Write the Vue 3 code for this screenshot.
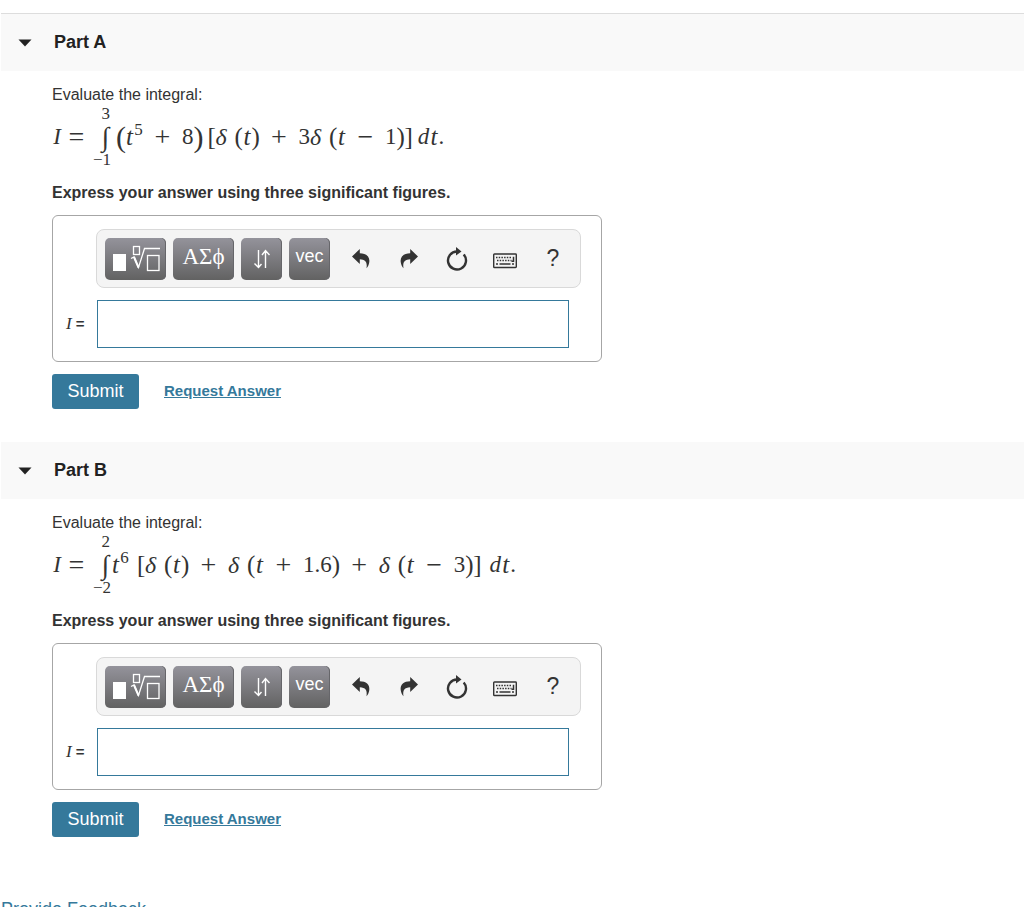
<script setup>
import { reactive } from 'vue'

const m = (kind, text) => ({ kind, text })
const gap = m('gap', '')
const gapSmall = m('gap-small', '')

const parts = reactive([
  {
    id: 'a',
    title: 'Part A',
    open: true,
    answer: '',
    upper: '3',
    lower: '−1',
    terms: [
      gapSmall, m('paren big', '('), m('var', 't'), m('sup', '5'), m('op', '+'), m('num', '8'), m('paren big', ')'), gapSmall,
      m('bracket', '['), m('delta', 'δ'), gap, m('paren', '('), m('var', 't'), m('paren', ')'), m('op', '+'),
      m('num', '3'), m('delta', 'δ'), gap, m('paren', '('), m('var', 't'), m('op', '−'), m('num', '1'),
      m('paren', ')'), m('bracket', ']'), gapSmall, m('diff', 'd'), m('var', 't'), m('dot', '.')
    ]
  },
  {
    id: 'b',
    title: 'Part B',
    open: true,
    answer: '',
    upper: '2',
    lower: '−2',
    terms: [
      m('var', 't'), m('sup', '6'), gap, m('bracket', '['), m('delta', 'δ'), gap,
      m('paren', '('), m('var', 't'), m('paren', ')'), m('op', '+'), m('delta', 'δ'), gap, m('paren', '('), m('var', 't'),
      m('op', '+'), m('num', '1.6'), m('paren', ')'), m('op', '+'), m('delta', 'δ'), gap, m('paren', '('),
      m('var', 't'), m('op', '−'), m('num', '3'), m('paren', ')'), m('bracket', ']'), gap,
      m('diff', 'd'), m('var', 't'), m('dot', '.')
    ]
  }
])
</script>

<template>
  <main class="page">
    <section v-for="part in parts" :key="part.id" class="part">
      <h2 class="part-head">
        <button type="button" class="toggle" :aria-expanded="part.open" @click="part.open = !part.open">
          <svg class="caret" viewBox="0 0 14 8" aria-hidden="true"><path d="M.5 .5h13L7 7.5z" fill="#222" /></svg>
          <span>{{ part.title }}</span>
        </button>
      </h2>

      <div v-if="part.open" class="part-body">
        <p class="prompt">Evaluate the integral:</p>
        <div class="formula">
          <span class="m lead">I</span>
          <span class="m equals">=</span>
          <span class="integral">
            <span class="limit upper">{{ part.upper }}</span>
            <span class="sign">∫</span>
            <span class="limit">{{ part.lower }}</span>
          </span>
          <span v-for="(t, i) in part.terms" :key="i" class="m" :class="t.kind">{{ t.text }}</span>
        </div>
        <p class="directions">Express your answer using three significant figures.</p>

        <form class="answer" @submit.prevent>
          <div class="answer-box">
            <div class="toolbar" role="toolbar" aria-label="Equation tools">
              <button type="button" class="key wide" aria-label="Templates">
                <svg class="template-icon" viewBox="0 0 50 30" fill="none" stroke="#fff" aria-hidden="true">
                  <rect x="2" y="10" width="13" height="17" fill="#fff" stroke="none" />
                  <rect x="22.5" y="2.5" width="6" height="8" stroke-width="1.3" />
                  <path d="M20 14.5l3-1.5 4.500 10.500L33.500 4.500H49" stroke-width="1.3" />
                  <path d="M23 13l4.500 10.500" stroke-width="2" />
                  <rect x="36.500" y="11.500" width="11.500" height="15" stroke-width="1.300" />
                </svg>
              </button>
              <button type="button" class="key wide greek">ΑΣϕ</button>
              <button type="button" class="key" aria-label="Arrows">
                <svg class="arrows-icon" viewBox="0 0 16 20" fill="none" stroke="#fff" stroke-width="1.4" aria-hidden="true">
                  <path d="M4.500 1v17M.5 14.500l4 4 3-3.500M11.500 19V2M8 6l3.500-4.500L15.500 6" />
                </svg>
              </button>
              <button type="button" class="key vec">vec</button>
              <div class="tools">
                <button type="button" class="tool" aria-label="Undo">
                  <svg viewBox="0 0 24 24" aria-hidden="true"><path d="M3 9.500L10.800 2v4.300C17 6.300 21 9.500 20.300 15c-.3 2.500-1.300 4.500-2.800 6.300 1-6-1-8.800-6.700-9V17z" fill="#333" /></svg>
                </button>
                <button type="button" class="tool" aria-label="Redo">
                  <svg viewBox="0 0 24 24" aria-hidden="true"><path d="M21 9.500L13.200 2v4.300C7 6.300 3 9.500 3.700 15c.3 2.500 1.300 4.500 2.800 6.300-1-6 1-8.800 6.700-9V17z" fill="#333" /></svg>
                </button>
                <button type="button" class="tool" aria-label="Reset">
                  <svg viewBox="0 0 24 24" aria-hidden="true">
                    <path d="M12 4.500a9 9 0 1 0 6.700 3" fill="none" stroke="#333" stroke-width="2.400" />
                    <path d="M11 0l5.500 4.500-5.500 4z" fill="#333" />
                  </svg>
                </button>
                <button type="button" class="tool" aria-label="Keyboard shortcuts">
                  <svg class="keyboard" viewBox="0 0 24 24" fill="none" stroke="#333" aria-hidden="true">
                    <rect x=".7" y="7" width="22.600" height="13.500" rx=".8" stroke-width="1.400" />
                    <path d="M3 10.500h15.500M4 13.500h14.500" stroke-width="1.500" stroke-dasharray="1.500 1.200" />
                    <path d="M3 17h2M6.500 17h11M19 17h2M20.500 9.700v4.600h-2" stroke-width="1.500" />
                  </svg>
                </button>
                <button type="button" class="tool help" aria-label="Help">?</button>
              </div>
            </div>
            <label class="answer-label" :for="'answer-' + part.id"><i>I</i> =</label>
            <input :id="'answer-' + part.id" v-model="part.answer" class="answer-input" type="text" autocomplete="off" />
          </div>
          <div class="actions">
            <button type="submit" class="submit">Submit</button>
            <a href="#" class="request" @click.prevent>Request Answer</a>
          </div>
        </form>
      </div>
    </section>
    <footer class="footer"><a href="#" @click.prevent>Provide Feedback</a></footer>
  </main>
</template>

<style>
body {
  background: #fff;
}
</style>

<style scoped>
.page {
  padding: 14px 0 0 1px;
  font-family: "Liberation Sans", Arial, sans-serif;
  font-size: 16px;
  color: #333;
}
button {
  font: inherit;
  border: 0;
  cursor: pointer;
}
p {
  margin: 0;
}
.part {
  padding-bottom: 33px;
}
.part-head {
  margin: 0;
  background: #f9f9f9;
}
.part:first-child .part-head {
  box-shadow: 0 -1px #ddd;
}
.toggle {
  display: flex;
  align-items: center;
  gap: 22px;
  width: 100%;
  height: 57px;
  padding: 0 17px;
  background: transparent;
  color: #222;
  font-size: 18px;
  font-weight: bold;
}
.caret {
  width: 14px;
  height: 8px;
}
.part-body {
  padding: 14px 51px 0;
}
.prompt {
  line-height: 20px;
}
.formula {
  display: flex;
  align-items: center;
  height: 64px;
  font-family: "Liberation Serif", "Times New Roman", serif;
}
.m {
  flex: none;
  height: 28px;
  line-height: 28px;
  text-align: center;
  font-size: 23px;
}
.lead {
  width: 10px;
  font-style: italic;
}
.equals {
  width: 17px;
  margin-left: 6px;
  font-size: 28px;
}
.integral {
  display: flex;
  flex-direction: column;
  align-items: flex-end;
  width: 24px;
  margin-left: 2px;
}
.limit {
  font-size: 17px;
  line-height: 16px;
}
.upper {
  padding-right: 1px;
}
.sign {
  padding-right: 2px;
  font-size: 27px;
  font-style: italic;
  line-height: 30px;
}
.var {
  width: 9px;
  font-size: 25px;
  font-style: italic;
}
.delta {
  width: 11px;
  font-size: 24px;
  font-style: italic;
}
.diff {
  width: 12px;
  font-style: italic;
}
.paren {
  width: 8px;
  font-size: 25px;
}
.big {
  width: 9px;
  font-size: 30px;
}
.bracket {
  width: 8px;
  font-size: 25px;
}
.sup {
  width: 9px;
  height: 38px;
  line-height: 24px;
  font-size: 17px;
}
.op {
  width: 17px;
  margin: 0 11px;
  font-size: 28px;
}
.gap {
  width: 8px;
}
.gap-small {
  width: 5px;
}
.directions {
  margin: 12px 0 10px;
  line-height: 24px;
  font-weight: bold;
}
.answer-box {
  box-sizing: border-box;
  display: grid;
  grid-template-columns: 45px minmax(0, 1fr);
  row-gap: 12px;
  max-width: 550px;
  padding: 13px 20px 13px 0;
  border: 1px solid #a6a6a6;
  border-radius: 6px;
}
.toolbar {
  grid-column: 2;
  box-sizing: border-box;
  display: flex;
  align-items: center;
  gap: 7px;
  height: 59px;
  margin-left: -2px;
  padding-left: 8px;
  background: #f4f4f4;
  border: 1px solid #d9d9d9;
  border-radius: 8px;
}
.key {
  display: flex;
  align-items: center;
  justify-content: center;
  width: 41px;
  height: 42px;
  padding: 0;
  border-radius: 5px;
  background: linear-gradient(#94939b, #626262);
  box-shadow: inset -1px 0 #66666a;
  color: #fff;
}
.wide {
  width: 61px;
}
.template-icon {
  width: 50px;
  height: 30px;
}
.greek {
  padding-bottom: 3px;
  font-family: "Liberation Serif", "Times New Roman", serif;
  font-size: 23px;
}
.arrows-icon {
  width: 16px;
  height: 20px;
}
.vec {
  padding-bottom: 4px;
  font-size: 18px;
}
.tools {
  display: flex;
}
.tool {
  display: flex;
  align-items: center;
  justify-content: center;
  width: 48px;
  height: 42px;
  padding: 0;
  background: transparent;
  color: #333;
}
.tool svg {
  width: 24px;
  height: 24px;
}
.help {
  font-size: 23px;
}
.answer-label {
  align-self: center;
  padding-left: 13px;
  font-size: 15px;
  font-weight: bold;
}
.answer-label i {
  font-family: "Liberation Serif", "Times New Roman", serif;
  font-size: 17px;
  font-weight: normal;
}
.answer-input {
  box-sizing: border-box;
  width: calc(100% - 11px);
  height: 48px;
  margin-left: -1px;
  padding: 0 8px;
  border: 1px solid #35799b;
  border-radius: 0;
  outline: 0;
  background: #fff;
  font: inherit;
}
.actions {
  display: flex;
  align-items: center;
  gap: 25px;
  padding-top: 12px;
}
.submit {
  width: 87px;
  height: 35px;
  padding: 0;
  background: #35799b;
  border-radius: 3px;
  color: #fff;
  font-size: 18px;
}
.request {
  padding-bottom: 3px;
  color: #35799b;
  font-size: 15px;
  font-weight: bold;
}
.footer {
  padding-top: 29px;
  font-size: 18px;
  line-height: 20px;
}
.footer a {
  color: #35799b;
  text-decoration: none;
}
</style>
